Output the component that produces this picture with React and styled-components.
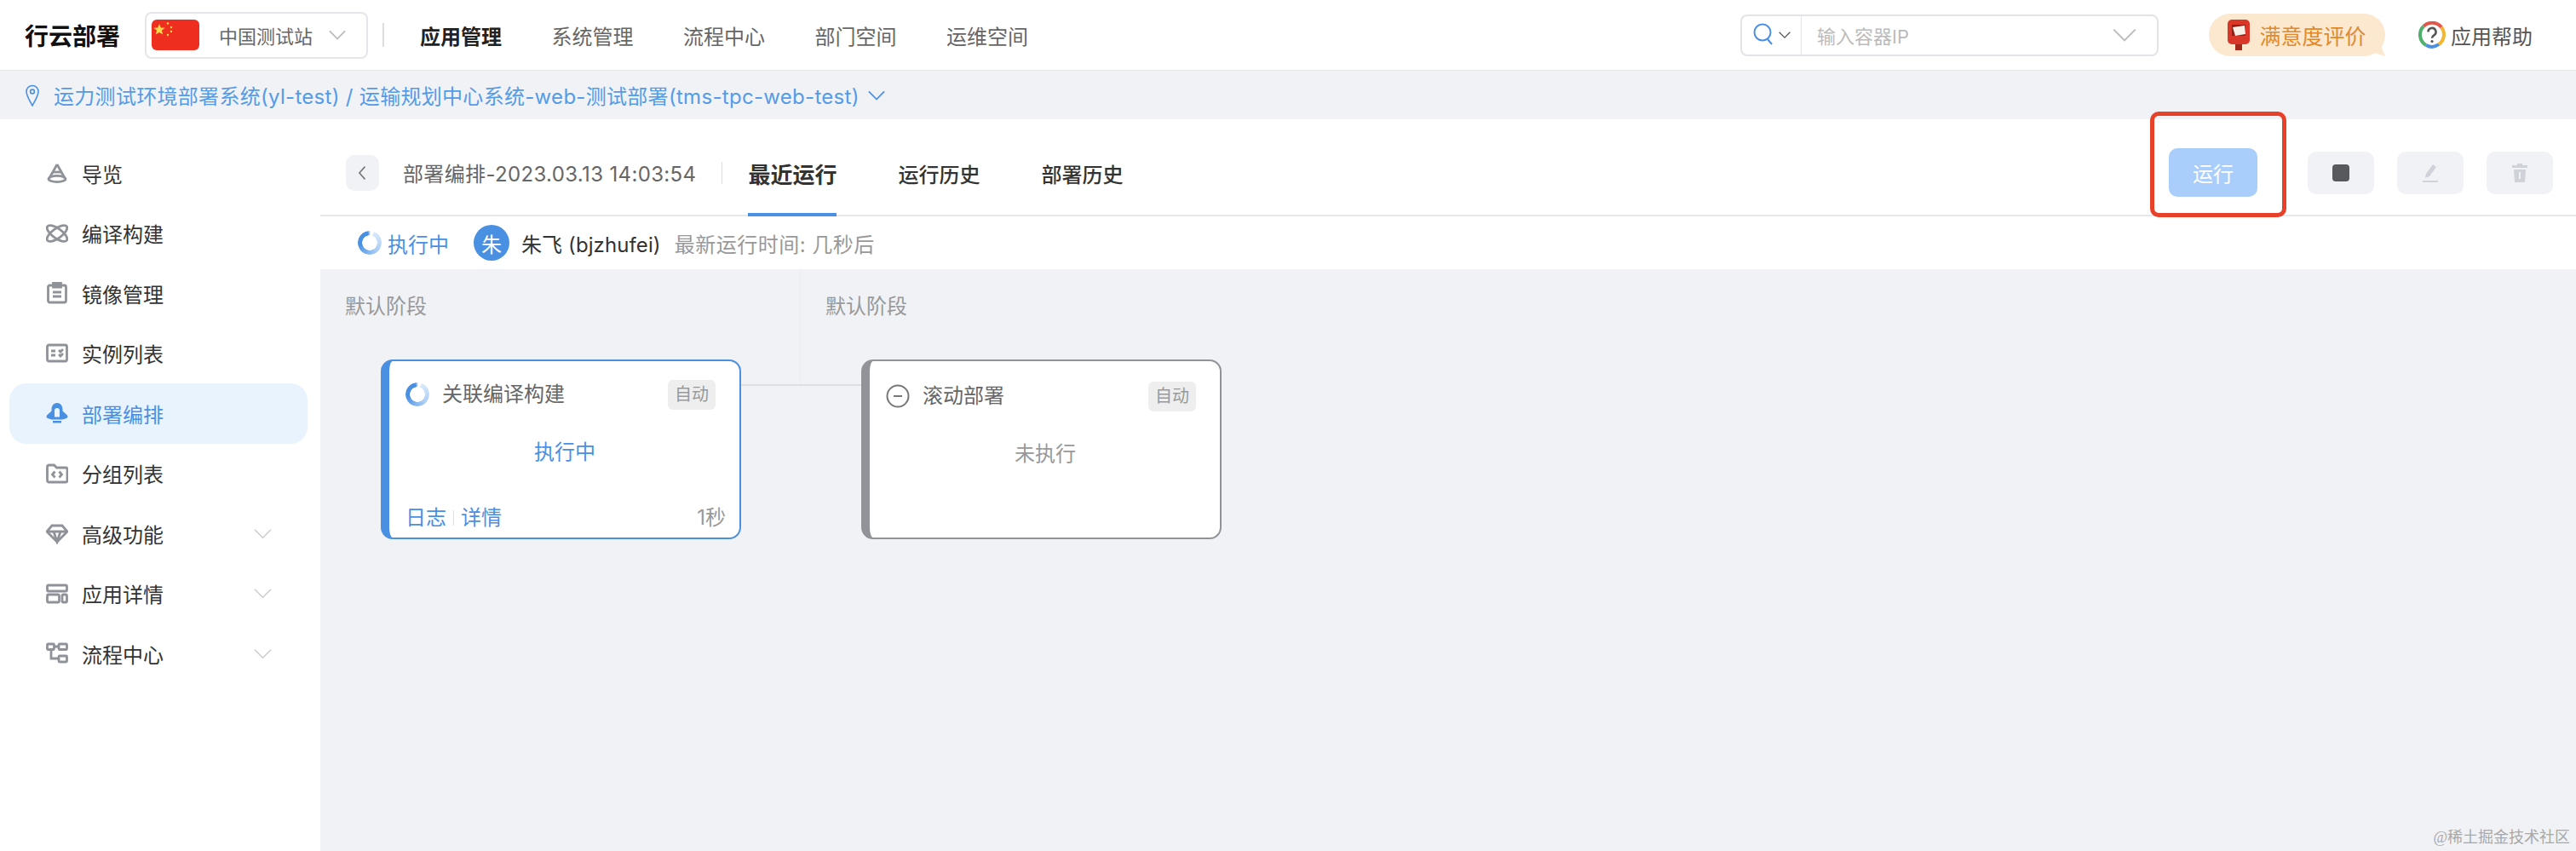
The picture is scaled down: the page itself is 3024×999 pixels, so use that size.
import React from 'react'
import styled, { createGlobalStyle } from 'styled-components'

const colors = {
  blue: '#4a90e2',
  lightBlue: '#e8f3fe',
  canvas: '#f0f2f6',
  line: '#e6e8eb',
  text: '#333',
  muted: '#999',
  icon: '#8f9399',
}

const GlobalStyle = createGlobalStyle`
  html, body {
    margin: 0;
    padding: 0;
    background: #fff;
    overflow: hidden;
  }
  * {
    box-sizing: border-box;
  }
  body {
    font-family: Inter, "Noto Sans CJK SC", sans-serif;
    font-size: 24px;
    color: ${colors.text};
  }
  svg {
    display: block;
    flex-shrink: 0;
  }
`

const navItems = ['系统管理', '流程中心', '部门空间', '运维空间']

const Chevron = ({ size = 22, color = '#bbb', width = 2, dir = 'down' }) => (
  <svg width={size} height={size} viewBox="0 0 22 22" fill="none">
    <path
      d={dir === 'down' ? 'M1 6l10 10L21 6' : 'M14 2L6 11l8 9'}
      stroke={color}
      strokeWidth={width}
    />
  </svg>
)

const Flag = () => (
  <svg width="56" height="36" viewBox="0 0 56 36">
    <rect width="56" height="36" rx="6" fill="#ee2f1f" />
    <path d="M9 5l1.8 4.6 4.9.2-3.8 3 1.3 4.8L9 14.9l-4.2 2.7 1.3-4.8-3.8-3 4.9-.2z" fill="#fbd84a" />
    <circle cx="19" cy="4.5" r="1.2" fill="#fbd84a" />
    <circle cx="23" cy="9" r="1.2" fill="#fbd84a" />
    <circle cx="23" cy="14" r="1.2" fill="#fbd84a" />
    <circle cx="19" cy="18" r="1.2" fill="#fbd84a" />
  </svg>
)

const Mailbox = () => (
  <svg width="26" height="36" viewBox="0 0 26 36">
    <rect x="9" y="26" width="8" height="10" fill="#a3281c" />
    <rect x="0" y="0" width="26" height="29" rx="5" fill="#d8372a" />
    <path d="M5 6h16v13H5z" fill="#8f2017" />
    <path d="M6 9l14-2 1 10-12 2z" fill="#f6efe8" />
  </svg>
)

const HelpIcon = () => (
  <svg width="32" height="32" viewBox="0 0 32 32" fill="none">
    <path d="M6 6A14 14 0 0 1 27 7" stroke="#e2574c" strokeWidth="4" />
    <path d="M27 7A14 14 0 0 1 24 27" stroke="#f3b62f" strokeWidth="4" />
    <path d="M24 27A14 14 0 0 1 9 28" stroke="#4a90e2" strokeWidth="4" />
    <path d="M9 28A14 14 0 0 1 6 6" stroke="#4fb06d" strokeWidth="4" />
    <path d="M11.5 12.5a4.5 4.5 0 1 1 6.8 3.8c-1.6 1-2.3 1.8-2.3 3.4" stroke="#555" strokeWidth="2.6" />
    <circle cx="16" cy="23.6" r="1.6" fill="#555" />
  </svg>
)

const SearchIcon = () => (
  <svg width="24" height="28" viewBox="0 0 24 28" fill="none">
    <circle cx="11" cy="11" r="9.5" stroke={colors.blue} strokeWidth="2" />
    <path d="M17 19l5 6" stroke={colors.blue} strokeWidth="2" />
  </svg>
)

const PinIcon = () => (
  <svg width="16" height="26" viewBox="0 0 16 26" fill="none">
    <path d="M8 25C4 18 1 13 1 8.5a7 7 0 0 1 14 0C15 13 12 18 8 25z" stroke={colors.blue} strokeWidth="1.6" />
    <circle cx="8" cy="8.5" r="2.4" stroke={colors.blue} strokeWidth="1.6" />
  </svg>
)

const sideIcons = {
  overview: (
    <>
      <path d="M13 3L4 19" />
      <path d="M13 3l9 16" />
      <path d="M8 12h10" />
      <ellipse cx="13" cy="20" rx="10" ry="3.6" />
    </>
  ),
  build: (
    <>
      <ellipse cx="13" cy="13" rx="14" ry="5.6" transform="rotate(36 13 13)" />
      <ellipse cx="13" cy="13" rx="14" ry="5.6" transform="rotate(-36 13 13)" />
    </>
  ),
  image: (
    <>
      <rect x="2.5" y="4" width="21" height="20" rx="2" />
      <path d="M8.5 1.5h9V6h-9z" />
      <path d="M8 12h10M8 17h10" />
    </>
  ),
  instance: (
    <>
      <rect x="1.5" y="3" width="23" height="19" rx="2" />
      <path d="M6 10h5M6 15h5M15 9l2 2 3-3M15 14l2 2 3-3" />
    </>
  ),
  folder: (
    <>
      <path d="M1.5 5a2 2 0 0 1 2-2h6l3 3h10.5a2 2 0 0 1 2 2v13a2 2 0 0 1-2 2h-19.5a2 2 0 0 1-2-2z" />
      <path d="M10.5 10.5l-3 3.5 3 3.5M15.5 10.5l3 3.5-3 3.5" />
    </>
  ),
  diamond: (
    <>
      <path d="M7 4h12l6 7-12 12L1 11z" />
      <path d="M1 11h24M9 11l4 12 4-12" />
    </>
  ),
  detail: (
    <>
      <rect x="1.5" y="3" width="23" height="7" rx="1.5" />
      <rect x="1.5" y="14" width="14" height="9" rx="1.5" />
      <rect x="19" y="14" width="5.5" height="9" rx="1.5" />
    </>
  ),
  flow: (
    <>
      <rect x="1.5" y="2" width="8" height="6.5" rx="1" />
      <rect x="15" y="2" width="9.5" height="6.5" rx="1" />
      <rect x="15" y="16" width="9.5" height="7" rx="1" />
      <path d="M9.5 5H15M6 8.5V19h9" />
    </>
  ),
}

const RocketIcon = () => (
  <svg width="26" height="26" viewBox="0 0 26 26" fill="none">
    <path d="M13 1c4.5 0 6.5 4 6.5 8v1.5L25 15.5c.8 1 .5 3-1 3.5l-4.5 1.5h-13L2 19c-1.5-.5-1.8-2.500-1-3.500l5.500-5V9c0-4 2-8 6.500-8z" fill={colors.blue} />
    <path d="M10 10a3 3 0 0 1 6 0v7.5h-6z" fill={colors.lightBlue} />
    <path d="M8 22h10v2.5H8z" fill={colors.blue} />
  </svg>
)

const SideIcon = ({ name }) =>
  name === 'rocket' ? (
    <RocketIcon />
  ) : (
    <svg width="26" height="26" viewBox="0 0 26 26" fill="none" stroke={colors.icon} strokeWidth="2.8">
      {sideIcons[name]}
    </svg>
  )

const sideItems = [
  { label: '导览', icon: 'overview' },
  { label: '编译构建', icon: 'build' },
  { label: '镜像管理', icon: 'image' },
  { label: '实例列表', icon: 'instance' },
  { label: '部署编排', icon: 'rocket', active: true },
  { label: '分组列表', icon: 'folder' },
  { label: '高级功能', icon: 'diamond', more: true },
  { label: '应用详情', icon: 'detail', more: true },
  { label: '流程中心', icon: 'flow', more: true },
]

const MinusCircle = () => (
  <svg width="28" height="28" viewBox="0 0 28 28" fill="none">
    <circle cx="14" cy="14" r="12.5" stroke="#777" strokeWidth="2" />
    <path d="M9 14h10" stroke="#777" strokeWidth="2" />
  </svg>
)

const StageCard = ({ tone, icon, title, status, footer }) => (
  <Card $tone={tone}>
    <CardHead>
      {icon}
      <CardTitle>{title}</CardTitle>
      <Badge>自动</Badge>
    </CardHead>
    <CardStatus $tone={tone}>{status}</CardStatus>
    {footer}
  </Card>
)

export default function App() {
  return (
    <Page>
      <GlobalStyle />
      <Header>
        <Brand>行云部署</Brand>
        <SiteSelect>
          <Flag />
          <SiteName>中国测试站</SiteName>
          <Chevron size={20} color="#bbb" />
        </SiteSelect>
        <VDivider />
        <Nav>
          <NavItem $active>应用管理</NavItem>
          {navItems.map(item => (
            <NavItem key={item}>{item}</NavItem>
          ))}
        </Nav>
        <Search>
          <SearchType>
            <SearchIcon />
            <Chevron size={14} color="#555" />
          </SearchType>
          <SearchInput>输入容器IP</SearchInput>
          <Chevron size={28} color="#bbb" width={1.6} />
        </Search>
        <Feedback>
          <Mailbox />
          满意度评价
        </Feedback>
        <Help>
          <HelpIcon />
          应用帮助
        </Help>
      </Header>

      <Breadcrumb>
        <PinIcon />
        <CrumbText>运力测试环境部署系统(yl-test) / 运输规划中心系统-web-测试部署(tms-tpc-web-test)</CrumbText>
        <Chevron size={20} color={colors.blue} />
      </Breadcrumb>

      <Body>
        <Sidebar>
          {sideItems.map(item => (
            <SideRow key={item.label} $active={item.active}>
              <SideIcon name={item.icon} />
              <SideLabel>{item.label}</SideLabel>
              {item.more && <Chevron size={21} color="#ccc" width={1.6} />}
            </SideRow>
          ))}
        </Sidebar>

        <Main>
          <TabBar>
            <BackButton>
              <Chevron size={18} color="#777" dir="left" />
            </BackButton>
            <RunTitle>部署编排-2023.03.13 14:03:54</RunTitle>
            <TabDivider />
            <Tabs>
              <Tab $active>最近运行</Tab>
              <Tab>运行历史</Tab>
              <Tab>部署历史</Tab>
            </Tabs>
            <Actions>
              <RunWrap>
                <RunButton>运行</RunButton>
                <Highlight />
              </RunWrap>
              <ActionGroup>
                <IconButton>
                  <StopMark />
                </IconButton>
                <IconButton>
                  <svg width="20" height="22" viewBox="0 0 20 22">
                    <path d="M13 1l4 3-8 11-5 2 1-5z" fill="#cfd2d8" />
                    <path d="M1 20h18v2H1z" fill="#cfd2d8" />
                  </svg>
                </IconButton>
                <IconButton>
                  <svg width="18" height="22" viewBox="0 0 18 22">
                    <path d="M6 0h6v2h6v3H0V2h6z" fill="#cfd2d8" />
                    <path d="M2 7h14l-1 15H3z" fill="#cfd2d8" />
                    <path d="M8 10h2v8H8z" fill="#f0f2f6" />
                  </svg>
                </IconButton>
              </ActionGroup>
            </Actions>
          </TabBar>

          <StatusRow>
            <Spinner />
            <RunningText>执行中</RunningText>
            <Avatar>朱</Avatar>
            <UserName>朱飞 (bjzhufei)</UserName>
            <RunTime>最新运行时间: 几秒后</RunTime>
          </StatusRow>

          <Canvas>
            <Stage $width={564}>
              <StageName>默认阶段</StageName>
              <StageBody>
                <StageCard
                  tone="blue"
                  icon={<Spinner />}
                  title="关联编译构建"
                  status="执行中"
                  footer={
                    <CardFoot>
                      <FootLink>日志</FootLink>
                      <FootSep />
                      <FootLink>详情</FootLink>
                      <Duration>1秒</Duration>
                    </CardFoot>
                  }
                />
                <Connector />
              </StageBody>
            </Stage>
            <Stage>
              <StageName>默认阶段</StageName>
              <StageBody>
                <StageCard tone="gray" icon={<MinusCircle />} title="滚动部署" status="未执行" />
              </StageBody>
            </Stage>
          </Canvas>
        </Main>
      </Body>
      <Watermark>@稀土掘金技术社区</Watermark>
    </Page>
  )
}

const Page = styled.div`
  position: relative;
  width: 3024px;
  height: 999px;
  display: flex;
  flex-direction: column;
  overflow: hidden;
`

const Header = styled.header`
  height: 83px;
  flex-shrink: 0;
  display: flex;
  align-items: center;
  padding: 0 51px 0 29px;
  border-bottom: 1px solid ${colors.line};
  background: #fff;
`

const Brand = styled.div`
  font-size: 28px;
  font-weight: 600;
  color: #111;
  width: 112px;
  white-space: nowrap;
`

const SiteSelect = styled.div`
  margin-left: 29px;
  width: 262px;
  height: 55px;
  display: flex;
  align-items: center;
  padding: 0 24px 0 6px;
  border: 2px solid #e4e6e9;
  border-radius: 8px;
`

const SiteName = styled.span`
  flex: 1;
  margin-left: 23px;
  font-size: 22px;
  color: #666;
`

const VDivider = styled.div`
  margin-left: 17px;
  width: 2px;
  height: 28px;
  background: #dcdee2;
`

const Nav = styled.nav`
  margin-left: 42px;
  display: flex;
  gap: 58.5px;
`

const NavItem = styled.span`
  font-size: 24px;
  white-space: nowrap;
  font-weight: ${p => (p.$active ? 600 : 400)};
  color: ${p => (p.$active ? '#222' : '#666')};
`

const Search = styled.div`
  margin-left: auto;
  width: 491px;
  height: 49px;
  display: flex;
  align-items: center;
  padding-right: 24px;
  border: 2px solid #e2e4e8;
  border-radius: 8px;
`

const SearchType = styled.div`
  width: 70px;
  height: 100%;
  display: flex;
  align-items: center;
  gap: 6px;
  padding-left: 13px;
  border-right: 1px solid #e2e4e8;
`

const SearchInput = styled.span`
  flex: 1;
  padding-left: 18px;
  font-size: 22px;
  color: #bbb;
`

const Feedback = styled.div`
  position: relative;
  margin-left: 59px;
  width: 207px;
  height: 50px;
  display: flex;
  align-items: center;
  justify-content: center;
  gap: 11px;
  background: #fce8cf;
  border-radius: 25px;
  font-size: 25px;
  color: #e08a2c;

  &::after {
    content: '';
    position: absolute;
    right: 0;
    bottom: 0;
    width: 18px;
    height: 18px;
    background: #fce8cf;
    clip-path: polygon(100% 100%, 0 70%, 60% 0);
  }
`

const Help = styled.div`
  margin-left: 39px;
  display: flex;
  align-items: center;
  gap: 6px;
  font-size: 24px;
  color: #555;
  white-space: nowrap;
`

const Breadcrumb = styled.div`
  height: 57px;
  flex-shrink: 0;
  display: flex;
  align-items: center;
  gap: 10px;
  padding-left: 30px;
  background: ${colors.canvas};
  color: #549be8;
`

const CrumbText = styled.span`
  margin-left: 7px;
  font-size: 24px;
  letter-spacing: 0.3px;
  white-space: nowrap;
`

const Body = styled.div`
  flex: 1;
  display: flex;
  min-height: 0;
`

const Sidebar = styled.aside`
  width: 376px;
  flex-shrink: 0;
  padding: 28px 15px 0 11px;
  background: #fff;
  display: flex;
  flex-direction: column;
`

const SideRow = styled.div`
  height: 70.5px;
  display: flex;
  align-items: center;
  gap: 16px;
  padding: 0 42px 0 43px;
  border-radius: 20px;
  font-size: 24px;
  color: ${p => (p.$active ? colors.blue : '#333')};
  background: ${p => (p.$active ? colors.lightBlue : 'transparent')};
`

const SideLabel = styled.span`
  flex: 1;
`

const Main = styled.main`
  flex: 1;
  min-width: 0;
  display: flex;
  flex-direction: column;
`

const TabBar = styled.div`
  height: 114px;
  flex-shrink: 0;
  display: flex;
  align-items: center;
  padding: 13px 27px 0 30px;
  border-bottom: 2px solid ${colors.line};
`

const BackButton = styled.div`
  width: 39px;
  height: 42px;
  display: flex;
  align-items: center;
  justify-content: center;
  background: ${colors.canvas};
  border-radius: 10px;
`

const RunTitle = styled.span`
  margin-left: 28px;
  font-size: 24px;
  letter-spacing: 0.35px;
  color: #666;
  white-space: nowrap;
`

const TabDivider = styled.div`
  margin-left: 30px;
  width: 1px;
  height: 26px;
  background: #dcdee2;
`

const Tabs = styled.div`
  margin-left: 30px;
  align-self: stretch;
  display: flex;
  gap: 72px;
  margin-bottom: -2px;
`

const Tab = styled.div`
  display: flex;
  align-items: center;
  padding-top: 3px;
  font-size: ${p => (p.$active ? 26 : 24)}px;
  font-weight: ${p => (p.$active ? 600 : 500)};
  color: #333;
  border-bottom: 4px solid ${p => (p.$active ? colors.blue : 'transparent')};
`

const Actions = styled.div`
  margin-left: auto;
  display: flex;
  align-items: center;
  gap: 59px;
`

const RunWrap = styled.div`
  position: relative;
`

const RunButton = styled.div`
  width: 104px;
  height: 57px;
  display: flex;
  align-items: center;
  justify-content: center;
  background: #a9cefb;
  border-radius: 10px;
  color: #fff;
  font-size: 24px;
`

const Highlight = styled.div`
  position: absolute;
  top: -43px;
  bottom: -24px;
  left: -22px;
  right: -34px;
  border: 5px solid #e8412a;
  border-radius: 10px;
`

const ActionGroup = styled.div`
  display: flex;
  gap: 27px;
`

const IconButton = styled.div`
  width: 78px;
  height: 50px;
  display: flex;
  align-items: center;
  justify-content: center;
  background: ${colors.canvas};
  border-radius: 10px;
`

const StopMark = styled.div`
  width: 20px;
  height: 20px;
  border-radius: 4px;
  background: #58595d;
`

const StatusRow = styled.div`
  height: 62px;
  flex-shrink: 0;
  display: flex;
  align-items: center;
  padding-left: 44px;
  font-size: 24px;
`

const Spinner = styled.div`
  width: 28px;
  height: 28px;
  flex-shrink: 0;
  border-radius: 50%;
  background: conic-gradient(from 20deg, #dceafb 0deg, #a9cdf6 120deg, ${colors.blue} 240deg, ${colors.blue} 330deg, transparent 345deg);
  -webkit-mask: radial-gradient(circle, transparent 8.5px, #000 9px);
  mask: radial-gradient(circle, transparent 8.5px, #000 9px);
`

const RunningText = styled.span`
  margin-left: 7px;
  color: ${colors.blue};
`

const Avatar = styled.div`
  margin-left: 29px;
  width: 42px;
  height: 42px;
  display: flex;
  align-items: center;
  justify-content: center;
  border-radius: 50%;
  background: ${colors.blue};
  color: #fff;
  font-size: 24px;
`

const UserName = styled.span`
  margin-left: 14px;
  color: #333;
  letter-spacing: 0.1px;
  white-space: nowrap;
`

const RunTime = styled.span`
  margin-left: 16px;
  color: ${colors.muted};
  letter-spacing: 0.5px;
  white-space: nowrap;
`

const Canvas = styled.div`
  flex: 1;
  display: flex;
  background: ${colors.canvas};
`

const Stage = styled.section`
  width: ${p => (p.$width ? `${p.$width}px` : 'auto')};
  flex: ${p => (p.$width ? 'none' : 1)};
  align-self: flex-start;
  height: 135px;
  border-right: ${p => (p.$width ? '1px solid #ebedf1' : 'none')};
`

const StageName = styled.div`
  margin: 29px 0 0 29px;
  font-size: 24px;
  line-height: 30px;
  color: ${colors.muted};
`

const StageBody = styled.div`
  margin: 47px 0 0 71px;
  display: flex;
  align-items: flex-start;
`

const Card = styled.div`
  width: 423px;
  height: 211px;
  flex-shrink: 0;
  position: relative;
  padding: ${p => (p.$tone === 'blue' ? 21 : 23)}px 28px 0 19px;
  background: #fff;
  border: 2px solid ${p => (p.$tone === 'blue' ? colors.blue : '#919398')};
  border-left-width: 10px;
  border-radius: 14px;
`

const CardHead = styled.div`
  display: flex;
  align-items: center;
  gap: 15px;
  height: 36px;
`

const CardTitle = styled.span`
  flex: 1;
  font-size: 24px;
  line-height: 30px;
  color: #666;
`

const Badge = styled.span`
  width: 56px;
  height: 35px;
  line-height: 35px;
  text-align: center;
  border-radius: 6px;
  background: #eeeeee;
  font-size: 20px;
  color: ${colors.muted};
`

const CardStatus = styled.div`
  margin-top: 33px;
  padding-left: 10px;
  text-align: center;
  font-size: 24px;
  line-height: 34px;
  color: ${p => (p.$tone === 'blue' ? colors.blue : colors.muted)};
`

const CardFoot = styled.div`
  margin: 43px -12px 0 0;
  display: flex;
  align-items: center;
  font-size: 24px;
  line-height: 34px;
`

const FootLink = styled.span`
  color: ${colors.blue};
`

const FootSep = styled.span`
  width: 1px;
  height: 18px;
  margin: 0 8px;
  background: #dcdee2;
`

const Duration = styled.span`
  margin-left: auto;
  color: ${colors.muted};
`

const Connector = styled.div`
  width: 142px;
  height: 2px;
  margin-top: 29px;
  flex-shrink: 0;
  background: #dcdee2;
`

const Watermark = styled.div`
  position: absolute;
  right: 7px;
  bottom: 5px;
  font-family: "Liberation Serif", "Noto Sans CJK SC", serif;
  font-size: 18px;
  line-height: 22px;
  color: #a8a8a8;
`
